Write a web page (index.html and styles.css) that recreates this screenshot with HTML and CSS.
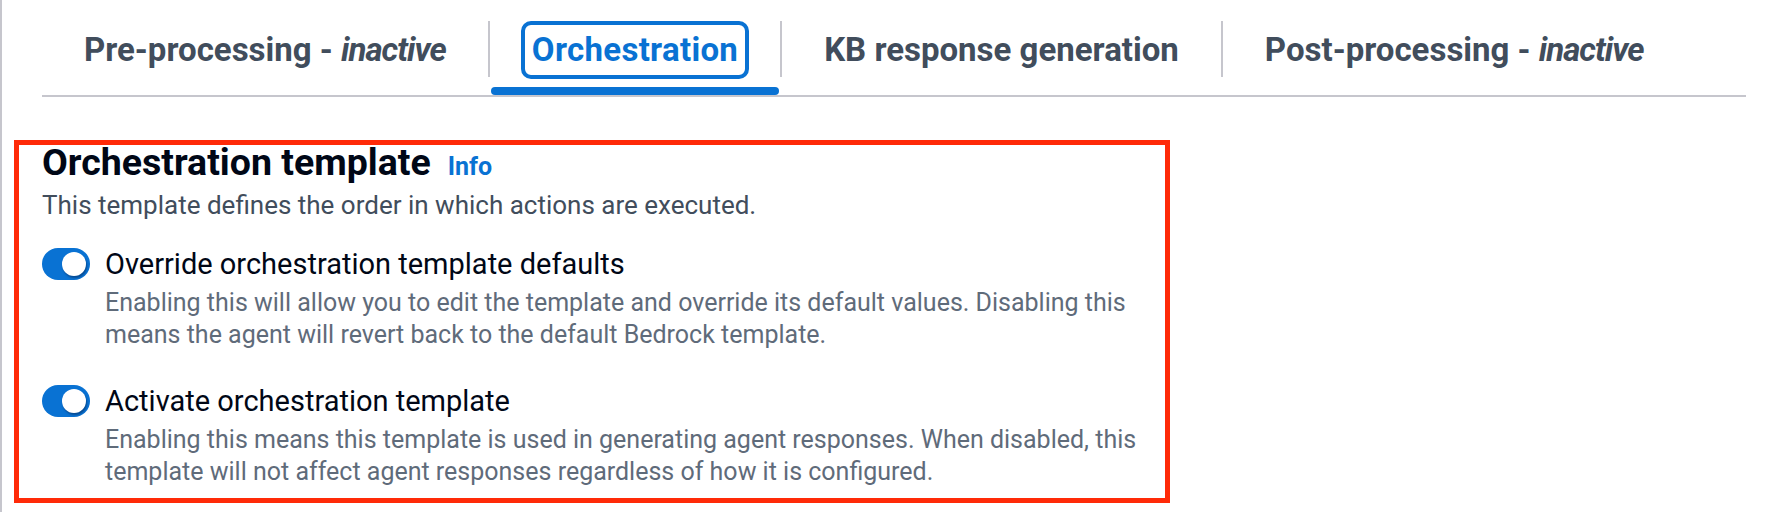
FILE: index.html
```html
<!DOCTYPE html>
<html lang="en">
<head>
<meta charset="utf-8">
<title>Orchestration template</title>
<link rel="stylesheet" href="styles.css">
</head>
<body>
<div class="page">
  <div class="tabs">
    <div class="tab">
      <div class="tab-head"><span class="tab-label">Pre-processing - <em>inactive</em></span></div>
      <div class="tab-ind"></div>
    </div>
    <div class="tab-sep"></div>
    <div class="tab active">
      <div class="tab-head"><span class="tab-label">Orchestration</span></div>
      <div class="tab-ind"></div>
    </div>
    <div class="tab-sep"></div>
    <div class="tab">
      <div class="tab-head"><span class="tab-label">KB response generation</span></div>
      <div class="tab-ind"></div>
    </div>
    <div class="tab-sep"></div>
    <div class="tab">
      <div class="tab-head"><span class="tab-label">Post-processing - <em>inactive</em></span></div>
      <div class="tab-ind"></div>
    </div>
  </div>

  <section class="panel">
    <h2 class="panel-title">Orchestration template<a class="info">Info</a></h2>
    <p class="panel-desc">This template defines the order in which actions are executed.</p>
    <div class="toggles">
      <div class="toggle">
        <span class="switch"><span class="knob"></span></span>
        <div class="toggle-text">
          <div class="toggle-label">Override orchestration template defaults</div>
          <div class="toggle-desc">Enabling this will allow you to edit the template and override its default values. Disabling this means the agent will revert back to the default Bedrock template.</div>
        </div>
      </div>
      <div class="toggle">
        <span class="switch"><span class="knob"></span></span>
        <div class="toggle-text">
          <div class="toggle-label">Activate orchestration template</div>
          <div class="toggle-desc">Enabling this means this template is used in generating agent responses. When disabled, this template will not affect agent responses regardless of how it is configured.</div>
        </div>
      </div>
    </div>
  </section>
</div>
</body>
</html>
```

FILE: styles.css
```css
* { box-sizing: border-box; }

html, body {
  margin: 0;
  padding: 0;
  background: #ffffff;
}

body {
  font-family: Roboto, "Liberation Sans", Arial, sans-serif;
  color: #000716;
}

.page {
  border-left: 2px solid #c6c6cd;
  min-height: 512px;
  overflow: hidden;
}

/* ---------- Tabs ---------- */
.tabs {
  display: flex;
  align-items: flex-start;
  margin-left: 40px;
  width: 1704px;
  border-bottom: 2px solid #c6c6cd;
}

.tab {
  display: flex;
  flex-direction: column;
}

.tab-head {
  height: 87px;
  padding: 12px 31px 0;
  display: flex;
  align-items: center;
}

.tab-label {
  display: inline-block;
  font-size: 33px;
  line-height: 40px;
  font-weight: 700;
  color: #414d5c;
  white-space: nowrap;
  padding: 5px 7px;
  border: 4px solid transparent;
  border-radius: 10px;
}

.tab-label em {
  font-style: italic;
  font-weight: 700;
  letter-spacing: -1px;
}

.tab-ind {
  height: 8px;
  border-radius: 4px;
  margin: 0 1px;
}

.tab.active .tab-label {
  color: #0972d3;
  border-color: #0972d3;
  letter-spacing: 0.3px;
}

.tab.active .tab-ind {
  background: #0972d3;
}

.tab-sep {
  width: 2px;
  height: 56px;
  margin-top: 21px;
  background: #c6c6cd;
  flex: none;
}

/* ---------- Panel ---------- */
.panel {
  margin: 43px 0 0 12px;
  width: 1156px;
  border: 5px solid #ff2a08;
  padding: 0 20px 10px 23px;
}

.panel-title {
  margin: 0;
  font-size: 37.5px;
  line-height: 34px;
  font-weight: 700;
  color: #000716;
}

.info {
  margin-left: 17px;
  font-size: 25px;
  font-weight: 700;
  color: #0972d3;
  text-decoration: none;
}

.panel-desc {
  margin: 5px 0 0;
  font-size: 26px;
  line-height: 32px;
  color: #414d5c;
}

.toggles {
  margin-top: 23px;
  display: flex;
  flex-direction: column;
  gap: 30px;
}

.toggle {
  display: flex;
  align-items: flex-start;
  gap: 15px;
}

.switch {
  flex: none;
  width: 48px;
  height: 32px;
  margin-top: 4px;
  border-radius: 16px;
  background: #0972d3;
  display: flex;
  align-items: center;
  justify-content: flex-end;
  padding-right: 4px;
}

.knob {
  width: 24px;
  height: 24px;
  border-radius: 50%;
  background: #ffffff;
  box-shadow: 1px 2px 2px rgba(0, 28, 70, 0.45);
}

.toggle-text {
  flex: 1;
}

.toggle-label {
  font-size: 29px;
  line-height: 40px;
  color: #000716;
}

.toggle-desc {
  margin-top: 3px;
  font-size: 25px;
  line-height: 32px;
  color: #5f6b7a;
}
```
